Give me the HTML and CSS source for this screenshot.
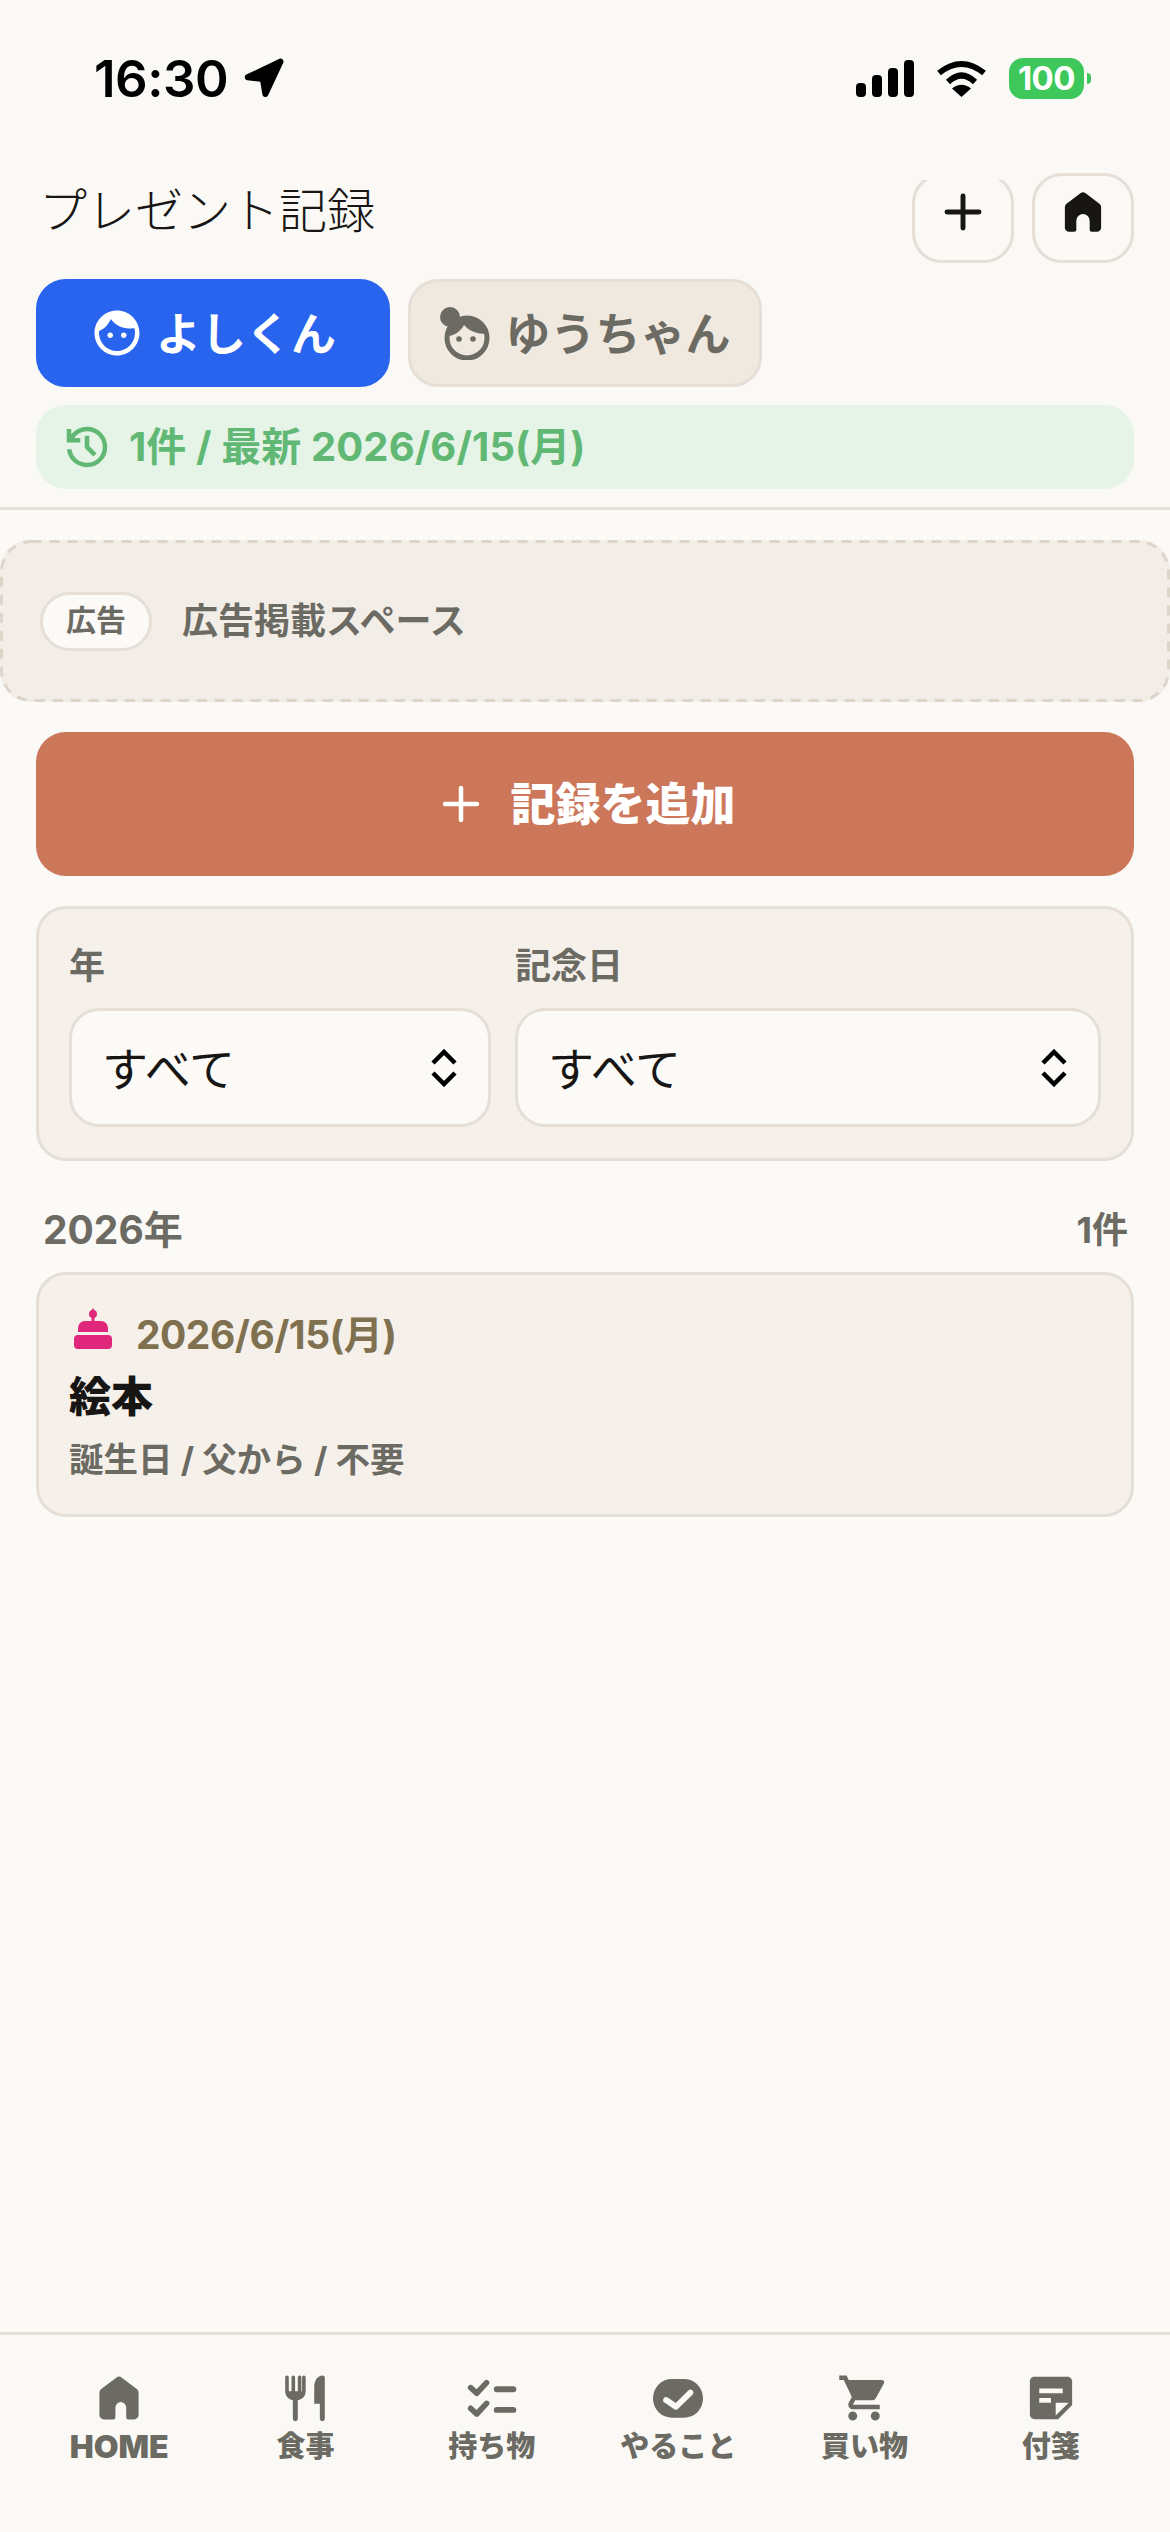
FILE: index.html
```html
<!DOCTYPE html>
<html lang="ja">

<head>
    <meta charset="UTF-8">
    <meta name="viewport" content="width=device-width, initial-scale=1.0">
    <title>プレゼント記録</title>
    <link rel="stylesheet" href="styles.css">
</head>

<body>
    <div class="status-bar">
        <div class="status-left">
            <span class="status-time">16:30</span>
            <svg class="status-arrow" viewBox="0 0 40 40"><path d="M35.500 .8a3 3 0 0 1 3.800 3.900L24 37.400a3 3 0 0 1-5.600-.9L16.300 23.700 3.200 22.200a3 3 0 0 1-.9-5.600Z"/></svg>
        </div>
        <div class="status-right">
            <svg class="status-signal" viewBox="0 0 58 37">
                <rect x="0" y="23" width="10" height="14" rx="4"/>
                <rect x="16" y="15" width="10" height="22" rx="4"/>
                <rect x="32" y="8" width="10" height="29" rx="4"/>
                <rect x="48" y="0" width="10" height="37" rx="4"/>
            </svg>
            <svg class="status-wifi" viewBox="0 0 51 37">
                <path d="M3 13Q25.500-5 48 13" fill="none" stroke="#000" stroke-width="6"/>
                <path d="M12 22Q25.500 9 39 22" fill="none" stroke="#000" stroke-width="6"/>
                <path d="M25.500 37 16 28.500Q25.500 21 35 28.500Z"/>
            </svg>
            <div class="battery"><span>100</span></div>
        </div>
    </div>

    <header class="top">
        <div class="title-row">
            <h1>プレゼント記録</h1>
            <div class="title-buttons">
                <button class="icon-btn" type="button">
                    <svg viewBox="0 0 24 24"><path d="M12 4.900V19.100M4.900 12H19.100" fill="none" stroke="#171614" stroke-width="2.200" stroke-linecap="round"/></svg>
                </button>
                <button class="icon-btn icon-btn-home" type="button">
                    <svg viewBox="0 0 24 24"><path fill="#171614" d="M10.900 2.900a1.800 1.800 0 0 1 2.200 0L19.900 8a2 2 0 0 1 .8 1.600V19.500a2 2 0 0 1-2 2H16.200a1 1 0 0 1-1-1V16.200a3.200 3.200 0 0 0-6.400 0V20.500a1 1 0 0 1-1 1H5.300a2 2 0 0 1-2-2V9.600a2 2 0 0 1 .8-1.600Z"/></svg>
                </button>
            </div>
        </div>

        <div class="tabs">
            <button class="tab tab-active" type="button">
                <svg viewBox="0 0 24 24"><path fill="#fff" d="M9 11.750c-.69 0-1.250.56-1.250 1.250s.56 1.250 1.250 1.250 1.250-.56 1.250-1.250-.56-1.250-1.250-1.250zm6 0c-.69 0-1.250.56-1.250 1.250s.56 1.250 1.250 1.250 1.250-.56 1.250-1.250-.56-1.250-1.250-1.250zM12 2C6.480 2 2 6.480 2 12s4.480 10 10 10 10-4.480 10-10S17.520 2 12 2zm0 18c-4.410 0-8-3.590-8-8 0-.29.02-.58.05-.86 2.360-1.050 4.230-2.980 5.210-5.370C11.070 8.330 14.050 10 17.420 10c.78 0 1.530-.09 2.250-.26.21.71.33 1.470.33 2.260 0 4.410-3.590 8-8 8z"/></svg>
                <span class="tab-text">よしくん</span>
            </button>
            <button class="tab" type="button">
                <svg viewBox="0 0 54 54">
                    <circle cx="28" cy="32" r="20" fill="none" stroke="#6b6a63" stroke-width="5"/>
                    <path fill="#6b6a63" d="M10 30C12 14 22 10 29 10 38 10 46 16 48 28 38 28 30 25 25 19 22 25 16 29 10 30Z"/>
                    <circle cx="11" cy="11" r="10" fill="#6b6a63"/>
                    <circle cx="20" cy="33" r="2.800" fill="#6b6a63"/>
                    <circle cx="34" cy="33" r="2.800" fill="#6b6a63"/>
                </svg>
                <span class="tab-text">ゆうちゃん</span>
            </button>
        </div>

        <div class="stats">
            <svg viewBox="0 -960 960 960"><path fill="#60b874" d="M480-120q-138 0-240.500-91.500T122-440h82q14 104 92.500 172T480-200q117 0 198.500-81.500T760-480q0-117-81.500-198.500T480-760q-69 0-129 32t-101 88h110v80H120v-240h80v94q51-64 124.500-99T480-840q150 0 255 105t105 255q0 150-105 255T480-120Zm112-192L440-464v-216h80v184l128 128-56 56Z"/></svg>
            <span class="stats-text">1件 / 最新 2026/6/15(月)</span>
        </div>
    </header>

    <main class="content">
        <div class="ad">
            <svg class="ad-border"><rect x="1.500" y="1.500" width="1167" height="159" rx="30"/></svg>
            <span class="ad-badge">広告</span>
            <span class="ad-text">広告掲載スペース</span>
        </div>

        <button class="add-btn" type="button">
            <svg viewBox="0 0 24 24"><path d="M12 4.900V19.100M4.900 12H19.100" fill="none" stroke="#fff" stroke-width="2" stroke-linecap="round"/></svg>
            <span class="add-text">記録を追加</span>
        </button>

        <div class="filter">
            <div class="filter-col">
                <div class="filter-label">年</div>
                <div class="select">
                    <span>すべて</span>
                    <svg viewBox="0 0 26 38"><path d="M2 14 13 3 24 14M2 24 13 35 24 24" fill="none" stroke="#000" stroke-width="4.500"/></svg>
                </div>
            </div>
            <div class="filter-col">
                <div class="filter-label">記念日</div>
                <div class="select">
                    <span>すべて</span>
                    <svg viewBox="0 0 26 38"><path d="M2 14 13 3 24 14M2 24 13 35 24 24" fill="none" stroke="#000" stroke-width="4.500"/></svg>
                </div>
            </div>
        </div>

        <div class="section-head">
            <span class="section-year">2026年</span>
            <span class="section-count">1件</span>
        </div>

        <div class="record">
            <div class="record-date">
                <svg viewBox="0 0 48 60">
                    <circle cx="24" cy="9" r="4" fill="#e0277b"/>
                    <path fill="#e0277b" d="M24 3 27 8H21ZM22.500 10h3v7h-3ZM9 23a7 7 0 0 1 7-7H32a7 7 0 0 1 7 7V27H9ZM5 34a4 4 0 0 1 4-4H39a4 4 0 0 1 4 4V40a4 4 0 0 1-4 4H9a4 4 0 0 1-4-4Z"/>
                </svg>
                <span class="record-date-text">2026/6/15(月)</span>
            </div>
            <div class="record-title">絵本</div>
            <div class="record-sub">誕生日 / 父から / 不要</div>
        </div>
    </main>

    <nav class="bottom-nav">
        <a class="nav-item">
            <svg viewBox="0 0 24 24"><path d="M10.900 2.900a1.800 1.800 0 0 1 2.200 0L19.900 8a2 2 0 0 1 .8 1.600V19.500a2 2 0 0 1-2 2H16.200a1 1 0 0 1-1-1V16.200a2.400 2.400 0 0 0-4.800 0V20.500a1 1 0 0 1-1 1H5.300a2 2 0 0 1-2-2V9.600a2 2 0 0 1 .8-1.600Z"/></svg>
            <span class="nav-latin">HOME</span>
        </a>
        <a class="nav-item">
            <svg viewBox="0 0 24 24"><path d="M11 9H9.800V2.800a.8.8 0 0 0-1.600 0V9H7V2.800a.8.8 0 0 0-1.600 0V9H4.200V2.800a.8.8 0 0 0-1.600 0V9c0 2 1.500 3.700 3.400 4V21.200a1 1 0 0 0 2.200 0V13c2-.3 3.500-2 3.500-4V2.800a.8.8 0 0 0-1.600 0V9ZM15.500 7v7.500H18V21.200a1 1 0 0 0 2.200 0V3a1 1 0 0 0-1-1C17 2 15.500 4.300 15.500 7Z" transform="translate(.6 0)"/></svg>
            <span>食事</span>
        </a>
        <a class="nav-item">
            <svg viewBox="0 0 24 24">
                <path d="M2.500 7.400 5.200 9.900 9.600 5.200M2.500 16.600 5.200 19.100 9.600 14.400" fill="none" stroke="#6b6a63" stroke-width="2.500" stroke-linecap="round" stroke-linejoin="round"/>
                <path d="M14.100 8.100H21.500M14.100 17.300H21.500" fill="none" stroke="#6b6a63" stroke-width="2.600" stroke-linecap="round"/>
            </svg>
            <span>持ち物</span>
        </a>
        <a class="nav-item">
            <svg viewBox="0 0 24 24">
                <rect x=".9" y="3.500" width="22.200" height="17.300" rx="8.500"/>
                <path d="M6.700 12.900 11.100 15.900 17.500 9.600" fill="none" stroke="#fbfaf6" stroke-width="2.600" stroke-linecap="round" stroke-linejoin="round"/>
            </svg>
            <span>やること</span>
        </a>
        <a class="nav-item">
            <svg viewBox="0 0 24 24"><path d="M7 18c-1.100 0-1.990.9-1.990 2S5.900 22 7 22s2-.9 2-2-.9-2-2-2zM1 2v2h2l3.600 7.590-1.350 2.450c-.16.28-.25.61-.25.96 0 1.100.9 2 2 2h12v-2H7.420c-.14 0-.25-.11-.25-.25l.03-.12.9-1.630h7.450c.75 0 1.410-.41 1.750-1.030l3.580-6.490c.08-.14.12-.31.12-.48 0-.55-.45-1-1-1H5.210l-.94-2H1zm16 16c-1.100 0-1.990.9-1.990 2s.89 2 1.990 2 2-.9 2-2-.9-2-2-2z"/></svg>
            <span>買い物</span>
        </a>
        <a class="nav-item">
            <svg viewBox=".5 .5 23 23"><path d="M19 3H4.990C3.890 3 3 3.900 3 5l.01 14c0 1.100.89 2 1.990 2h10l6-6V5c0-1.100-.9-2-2-2zM7 8h10v2H7V8zm5 6H7v-2h5v2zm2 5.500V14h5.500L14 19.500z"/></svg>
            <span>付箋</span>
        </a>
    </nav>
</body>

</html>
```

FILE: styles.css
```css
* {
    box-sizing: border-box;
}

body {
    margin: 0;
    min-height: 2532px;
    display: flex;
    flex-direction: column;
    position: relative;
    font-family: Inter, "Noto Sans CJK JP", sans-serif;
    background-color: #fbfaf6;
    color: #171614;
}

button {
    font-family: inherit;
    padding: 0;
    cursor: pointer;
}

/* status bar sits over the top of the header buttons */
.status-bar {
    position: absolute;
    top: 0;
    left: 0;
    right: 0;
    height: 180px;
    z-index: 2;
    display: flex;
    justify-content: space-between;
    padding: 48px 79px 0 94px;
    background-color: #faf9f6;
}

.status-left,
.status-right {
    display: flex;
    align-items: center;
    height: 60px;
}

.status-time {
    font-size: 51px;
    font-weight: 600;
    letter-spacing: -.5px;
    color: #000;
}

.status-arrow {
    width: 40px;
    height: 40px;
    margin-left: 16px;
}

.status-signal {
    width: 58px;
    height: 37px;
}

.status-wifi {
    width: 51px;
    height: 37px;
    margin-left: 22px;
}

.battery {
    width: 75px;
    height: 41px;
    margin-left: 22px;
    margin-right: 7px;
    border-radius: 14px;
    background-color: #3ec85c;
    color: #fff;
    font-size: 33px;
    font-weight: 700;
    letter-spacing: -.5px;
    line-height: 41px;
    text-align: center;
    position: relative;
}

.battery::after {
    content: "";
    position: absolute;
    right: -7px;
    top: 15px;
    width: 4px;
    height: 11px;
    border-radius: 0 6px 6px 0;
    background-color: #3ec85c;
}

.top {
    padding: 173px 36px 18px;
    background-color: #faf9f6;
    border-bottom: 3px solid #e5dfd8;
}

.title-row {
    display: flex;
    justify-content: space-between;
    align-items: flex-start;
}

h1 {
    margin: 0 0 0 3px;
    font-family: "Noto Sans CJK JP", serif;
    font-size: 48px;
    font-weight: 300;
    line-height: 68px;
    color: #171614;
}

.title-buttons {
    display: flex;
    gap: 18px;
}

.icon-btn {
    width: 102px;
    height: 90px;
    display: flex;
    align-items: center;
    justify-content: center;
    background-color: #faf9f6;
    border: 3px solid #e5dfd8;
    border-radius: 30px;
}

.icon-btn-home {
    position: relative;
    z-index: 3;
}

.icon-btn svg {
    width: 54px;
    height: 54px;
    margin-top: -12px;
}

.icon-btn-home svg {
    width: 50px;
    height: 50px;
}

.tabs {
    display: flex;
    gap: 18px;
    margin-top: 16px;
}

.tab {
    width: 354px;
    height: 108px;
    display: flex;
    align-items: center;
    justify-content: center;
    gap: 12px;
    border: 3px solid #e5dfd8;
    border-radius: 30px;
    background-color: #f0e9df;
    color: #6b6a63;
    font-size: 45px;
    font-weight: 700;
}

.tab-text {
    padding-bottom: 3px;
}

.tab-active {
    background-color: #2864ee;
    border-color: #2864ee;
    color: #fff;
}

.tab svg {
    width: 54px;
    height: 54px;
    flex: none;
}

.stats {
    display: flex;
    align-items: center;
    gap: 15px;
    height: 84px;
    margin-top: 18px;
    padding-left: 24px;
    border-radius: 30px;
    background-color: #e6f3e7;
    color: #60b874;
    font-size: 40px;
    font-weight: 700;
    letter-spacing: .1px;
}

.stats-text {
    padding-bottom: 6px;
}

.stats svg {
    width: 54px;
    height: 54px;
}

.content {
    flex: 1;
    padding: 30px 36px 0;
}

.ad {
    position: relative;
    display: flex;
    align-items: center;
    gap: 30px;
    height: 162px;
    margin: 0 -36px;
    padding-left: 40px;
    border-radius: 30px;
    background-color: #f2eee7;
}

/* dashes of the real border are longer than css dashed gives */
.ad-border {
    position: absolute;
    top: 0;
    left: 0;
    width: 100%;
    height: 100%;
    fill: none;
    stroke: #ddd4ca;
    stroke-width: 3;
    stroke-dasharray: 10 8;
}

.ad-badge {
    height: 59px;
    padding: 0 23px;
    border: 3px solid #e5dfd8;
    border-radius: 30px;
    background-color: #fbfaf6;
    color: #6b6a63;
    font-size: 30px;
    font-weight: 700;
    line-height: 50px;
}

.ad-text {
    padding-bottom: 6px;
    color: #6b6a63;
    font-size: 36px;
    font-weight: 700;
}

.add-btn {
    width: 100%;
    height: 144px;
    margin-top: 30px;
    display: flex;
    align-items: center;
    justify-content: center;
    gap: 22px;
    border: none;
    border-radius: 30px;
    background-color: #cc765a;
    color: #fff;
    font-size: 45px;
    font-weight: 900;
}

.add-text {
    padding-bottom: 6px;
}

.add-btn svg {
    width: 54px;
    height: 54px;
}

.filter {
    display: grid;
    grid-template-columns: 422px 1fr;
    gap: 24px;
    margin-top: 30px;
    padding: 30px 30px 31px;
    border: 3px solid #e5dfd8;
    border-radius: 30px;
    background-color: #f5f1ea;
}

.filter-label {
    height: 50px;
    margin-bottom: 19px;
    color: #6b6a63;
    font-size: 36px;
    font-weight: 700;
    line-height: 54px;
}

.select {
    height: 119px;
    display: flex;
    align-items: center;
    justify-content: space-between;
    padding: 0 31px 0 30px;
    border: 3px solid #e5dfd8;
    border-radius: 30px;
    background-color: #fbfaf6;
    font-size: 46px;
}

.select span {
    padding-bottom: 3px;
}

.select svg {
    width: 26px;
    height: 38px;
}

.section-head {
    display: flex;
    justify-content: space-between;
    align-items: center;
    height: 54px;
    margin-top: 40px;
    margin-bottom: 17px;
    padding: 0 6px 3px 7px;
    color: #6b6a63;
    font-weight: 700;
}

.section-year {
    font-size: 39px;
}

.section-count {
    font-size: 36px;
}

.record {
    padding: 30px;
    border: 3px solid #e5dfd8;
    border-radius: 30px;
    background-color: #f5f1ea;
}

.record-date {
    display: flex;
    align-items: center;
    gap: 19px;
    height: 60px;
    color: #7f7050;
    font-size: 39px;
    font-weight: 700;
    letter-spacing: -.5px;
}

.record-date-text {
    padding-bottom: 6px;
}

.record-date svg {
    width: 48px;
    height: 60px;
}

.record-title {
    margin-top: 2px;
    font-size: 42px;
    font-weight: 900;
    line-height: 60px;
}

.record-sub {
    margin-top: 9px;
    color: #6b6a63;
    font-size: 34.500px;
    font-weight: 700;
    line-height: 48px;
}

.bottom-nav {
    display: grid;
    grid-template-columns: repeat(6, 1fr);
    height: 200px;
    padding: 36px 26px 0;
    border-top: 3px solid #e5dfd8;
    background-color: #faf9f5;
}

.nav-item {
    display: flex;
    flex-direction: column;
    align-items: center;
    color: #6b6a63;
    font-size: 29px;
    font-weight: 900;
    line-height: 44px;
}

.nav-latin {
    font-size: 32px;
}

.nav-item svg {
    width: 54px;
    height: 54px;
    fill: #6b6a63;
}
```
